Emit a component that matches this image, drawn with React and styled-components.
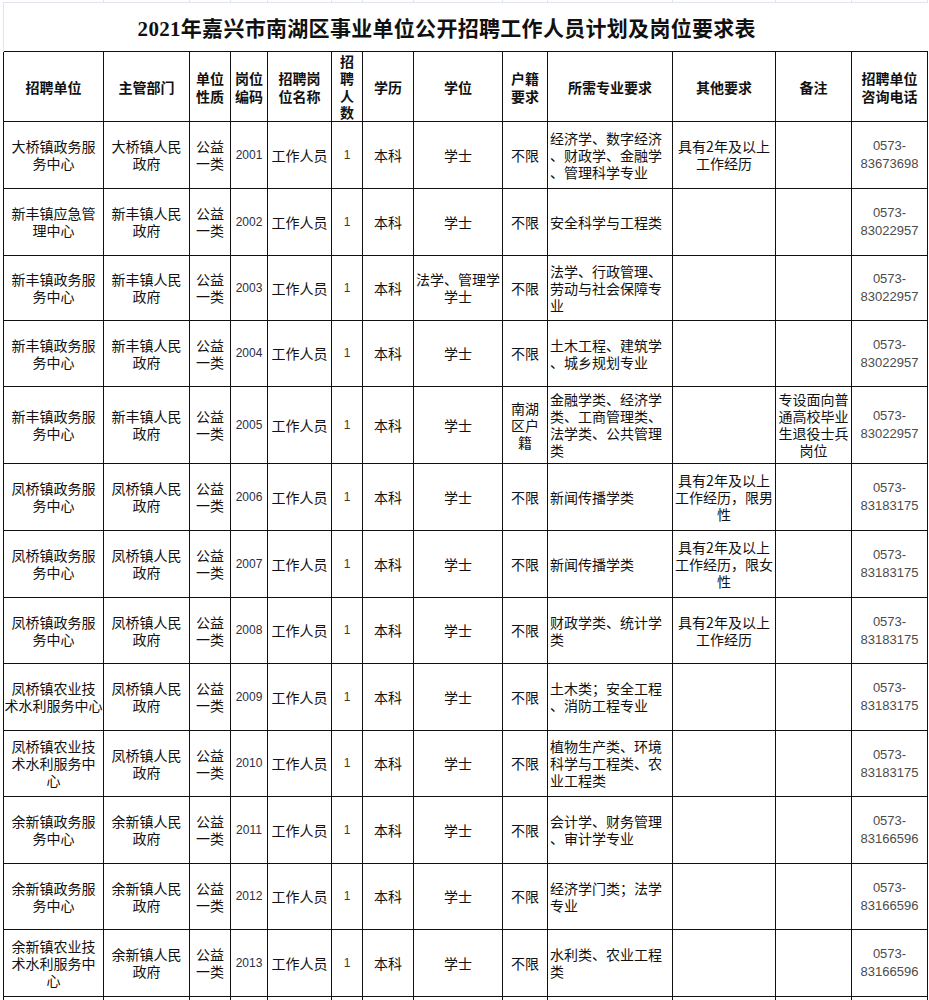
import React from 'react'
import styled, { createGlobalStyle } from 'styled-components'

const GlobalStyle = createGlobalStyle`
  html, body {
    margin: 0;
    padding: 0;
    background: #ffffff;
  }
  body {
    font-family: "Noto Sans CJK SC", "Liberation Sans", sans-serif;
    color: #111;
  }
`

const widths = [100, 86, 41, 37, 64, 31, 51, 89, 45, 125, 103, 76, 76]

const headers = [
  '招聘单位', '主管部门', '单位\n性质', '岗位\n编码', '招聘岗\n位名称', '招\n聘\n人\n数',
  '学历', '学位', '户籍\n要求', '所需专业要求', '其他要求', '备注', '招聘单位\n咨询电话',
]

const rows = [
  { h: 67, unit: '大桥镇政务服\n务中心', dept: '大桥镇人民\n政府', code: '2001', degree: '学士', hukou: '不限', major: '经济学、数字经济\n、财政学、金融学\n、管理科学专业', other: '具有2年及以上\n工作经历', note: '', tel: '0573-\n83673698' },
  { h: 67, unit: '新丰镇应急管\n理中心', dept: '新丰镇人民\n政府', code: '2002', degree: '学士', hukou: '不限', major: '安全科学与工程类', other: '', note: '', tel: '0573-\n83022957' },
  { h: 65, unit: '新丰镇政务服\n务中心', dept: '新丰镇人民\n政府', code: '2003', degree: '法学、管理学\n学士', hukou: '不限', major: '法学、行政管理、\n劳动与社会保障专\n业', other: '', note: '', tel: '0573-\n83022957' },
  { h: 66, unit: '新丰镇政务服\n务中心', dept: '新丰镇人民\n政府', code: '2004', degree: '学士', hukou: '不限', major: '土木工程、建筑学\n、城乡规划专业', other: '', note: '', tel: '0573-\n83022957' },
  { h: 77, unit: '新丰镇政务服\n务中心', dept: '新丰镇人民\n政府', code: '2005', degree: '学士', hukou: '南湖\n区户\n籍', major: '金融学类、经济学\n类、工商管理类、\n法学类、公共管理\n类', other: '', note: '专设面向普\n通高校毕业\n生退役士兵\n岗位', tel: '0573-\n83022957' },
  { h: 67, unit: '凤桥镇政务服\n务中心', dept: '凤桥镇人民\n政府', code: '2006', degree: '学士', hukou: '不限', major: '新闻传播学类', other: '具有2年及以上\n工作经历，限男\n性', note: '', tel: '0573-\n83183175' },
  { h: 67, unit: '凤桥镇政务服\n务中心', dept: '凤桥镇人民\n政府', code: '2007', degree: '学士', hukou: '不限', major: '新闻传播学类', other: '具有2年及以上\n工作经历，限女\n性', note: '', tel: '0573-\n83183175' },
  { h: 66, unit: '凤桥镇政务服\n务中心', dept: '凤桥镇人民\n政府', code: '2008', degree: '学士', hukou: '不限', major: '财政学类、统计学\n类', other: '具有2年及以上\n工作经历', note: '', tel: '0573-\n83183175' },
  { h: 67, unit: '凤桥镇农业技\n术水利服务中心', dept: '凤桥镇人民\n政府', code: '2009', degree: '学士', hukou: '不限', major: '土木类；安全工程\n、消防工程专业', other: '', note: '', tel: '0573-\n83183175' },
  { h: 66, unit: '凤桥镇农业技\n术水利服务中\n心', dept: '凤桥镇人民\n政府', code: '2010', degree: '学士', hukou: '不限', major: '植物生产类、环境\n科学与工程类、农\n业工程类', other: '', note: '', tel: '0573-\n83183175' },
  { h: 67, unit: '余新镇政务服\n务中心', dept: '余新镇人民\n政府', code: '2011', degree: '学士', hukou: '不限', major: '会计学、财务管理\n、审计学专业', other: '', note: '', tel: '0573-\n83166596' },
  { h: 66, unit: '余新镇政务服\n务中心', dept: '余新镇人民\n政府', code: '2012', degree: '学士', hukou: '不限', major: '经济学门类；法学\n专业', other: '', note: '', tel: '0573-\n83166596' },
  { h: 67, unit: '余新镇农业技\n术水利服务中\n心', dept: '余新镇人民\n政府', code: '2013', degree: '学士', hukou: '不限', major: '水利类、农业工程\n类', other: '', note: '', tel: '0573-\n83166596' },
]

const Page = styled.div`
  padding-left: 3px;
  width: 924px;
`

const Sheet = styled.table`
  border-collapse: collapse;
  table-layout: fixed;
  width: 924px;
`

const GridCell = styled.td`
  height: 2px;
  padding: 0;
  border-right: 1px solid #dfe4ee;
`

const TitleCell = styled.td`
  height: 48px;
  padding: 0 38px 0 0;
  border-top: 1px solid #dfe4ee;
  border-left: 1px solid #dfe4ee;
  text-align: center;
  vertical-align: middle;
  font-family: "Liberation Serif", "Noto Sans CJK SC", serif;
  font-weight: 700;
  font-size: 21px;
  letter-spacing: 0.3px;
  color: #111;
`

const HeadCell = styled.th`
  height: 69px;
  padding: 0;
  border: 1px solid #111;
  text-align: center;
  vertical-align: middle;
  white-space: pre;
  font-family: "Noto Sans CJK SC", sans-serif;
  font-weight: 700;
  font-size: 14px;
  line-height: ${p => (p.$tall ? '17px' : '18px')};
  color: #111;
`

const Cell = styled.td`
  padding: 0 ${p => (p.$align === 'left' ? '1px 0 2px' : '0')};
  border: 1px solid #111;
  text-align: ${p => p.$align || 'center'};
  vertical-align: middle;
  white-space: pre;
  overflow: hidden;
  font-family: ${p => (p.$num ? '"Liberation Sans", "Noto Sans CJK SC", sans-serif' : '"Noto Sans CJK SC", sans-serif')};
  font-size: ${p => (p.$num ? p.$num : '14px')};
  line-height: ${p => (p.$num === '13px' ? '18px' : '17px')};
  color: ${p => p.$color || '#111'};
`

export default function App() {
  return (
    <Page>
      <GlobalStyle />
      <Sheet>
        <colgroup>
          {widths.map((w, i) => <col key={i} style={{ width: w }} />)}
        </colgroup>
        <tbody>
          <tr>
            {widths.map((w, i) => <GridCell key={i} />)}
          </tr>
          <tr>
            <TitleCell colSpan={13}>2021年嘉兴市南湖区事业单位公开招聘工作人员计划及岗位要求表</TitleCell>
          </tr>
          <tr>
            {headers.map((h, i) => (
              <HeadCell key={i} $tall={i === 5}>{h}</HeadCell>
            ))}
          </tr>
          {rows.map(r => (
            <tr key={r.code} style={{ height: r.h }}>
              <Cell>{r.unit}</Cell>
              <Cell>{r.dept}</Cell>
              <Cell>{'公益\n一类'}</Cell>
              <Cell $num="12px" $color="#2a2d45">{r.code}</Cell>
              <Cell>工作人员</Cell>
              <Cell $num="12px" $color="#4a3a22">1</Cell>
              <Cell>本科</Cell>
              <Cell>{r.degree}</Cell>
              <Cell>{r.hukou}</Cell>
              <Cell $align="left">{r.major}</Cell>
              <Cell>{r.other}</Cell>
              <Cell>{r.note}</Cell>
              <Cell $num="13px" $color="#4b4b4b">{r.tel}</Cell>
            </tr>
          ))}
          <tr style={{ height: 67 }}>
            {widths.map((w, i) => <Cell key={i} />)}
          </tr>
        </tbody>
      </Sheet>
    </Page>
  )
}
